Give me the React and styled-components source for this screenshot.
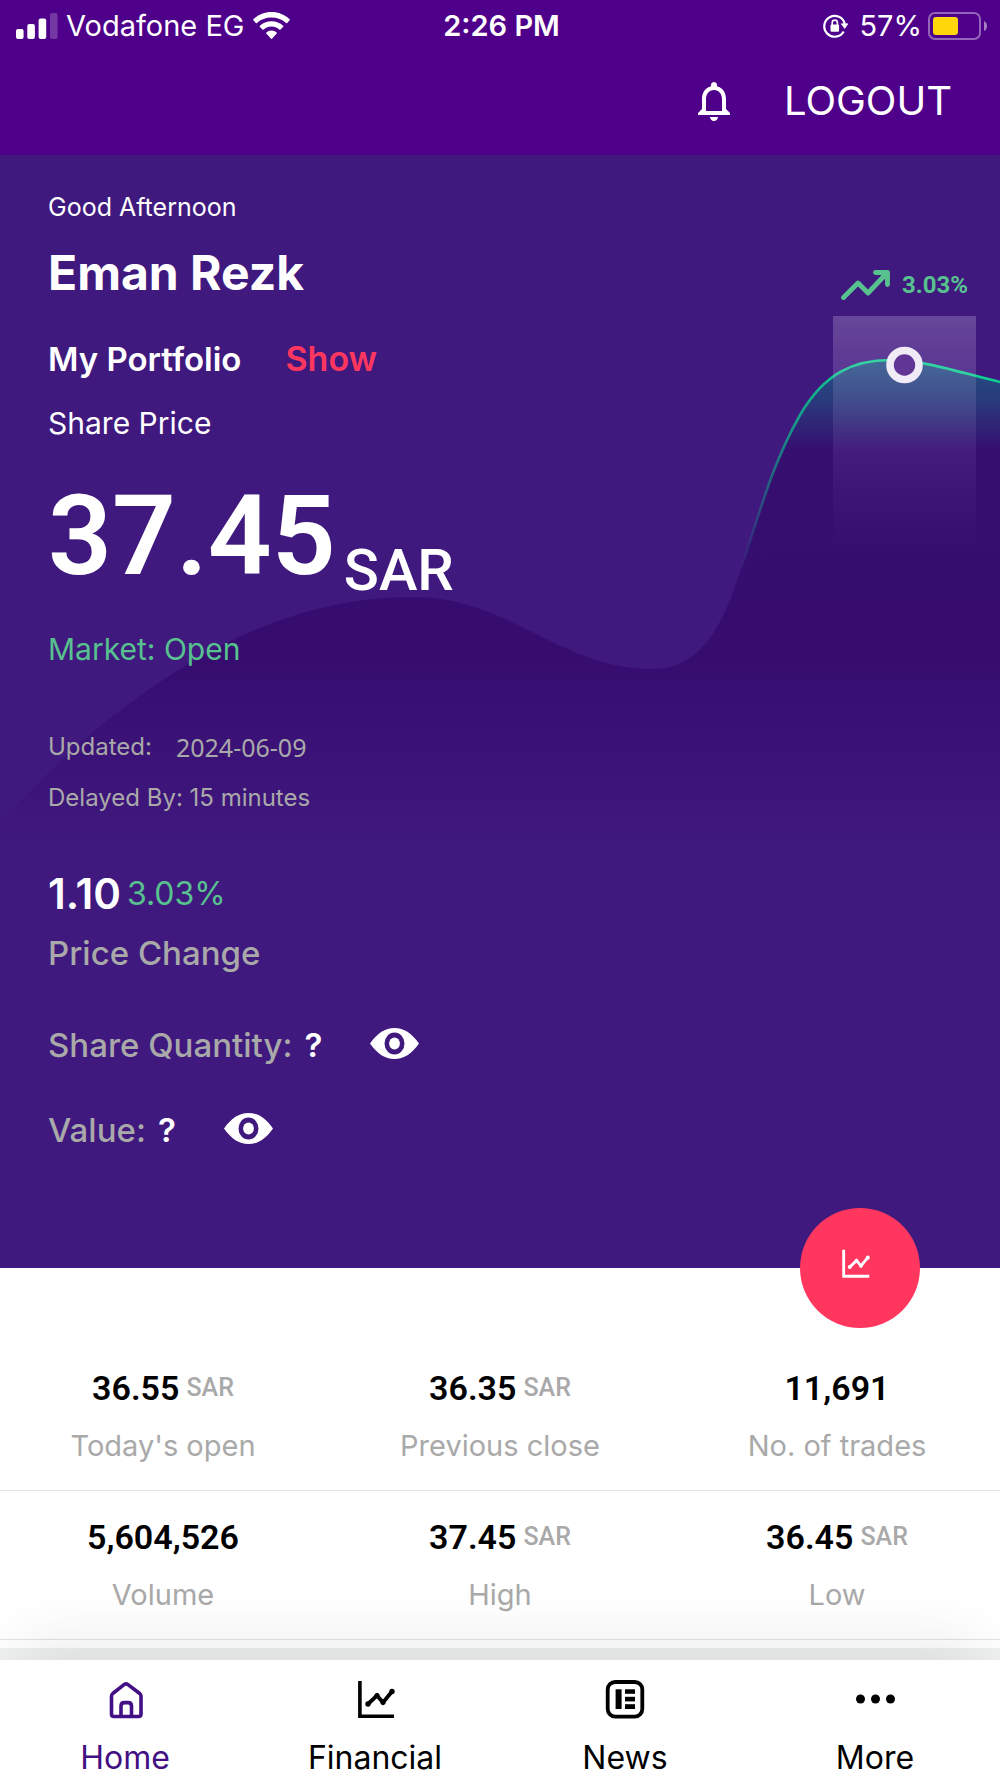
import React from "react";
import styled, { createGlobalStyle } from "styled-components";

const color = {
  header: "#4e008a",
  hero: "#40197f",
  green: "#58c28f",
  pink: "#ff375f",
  muted: "#a9a9a9",
  line: "#e2e2e2",
  active: "#430f85",
};

const GlobalStyle = createGlobalStyle`
  *, *::before, *::after { box-sizing: border-box; }
  body {
    margin: 0;
    background: #fff;
    font-family: Inter, "Liberation Sans", sans-serif;
    -webkit-font-smoothing: antialiased;
  }
  h1, h2, p, dl, dt, dd { margin: 0; font-weight: inherit; }
  button { margin: 0; padding: 0; border: 0; background: none; color: inherit; font: inherit; cursor: pointer; }
  a { color: inherit; text-decoration: none; }
  svg { display: block; flex: none; }
`;

const Header = styled.header`
  background: ${color.header};
  color: #fff;
`;

const StatusBar = styled.div`
  display: grid;
  grid-template-columns: 1fr auto 1fr;
  align-items: center;
  height: 51px;
  padding: 0 13px 0 16px;
  font-size: 29px;
  line-height: 40px;
`;

const StatusGroup = styled.div`
  display: flex;
  align-items: center;
  justify-content: ${(p) => (p.$end ? "flex-end" : "flex-start")};
  gap: ${(p) => (p.$end ? 6 : 8)}px;
`;

const Clock = styled.time`
  font-weight: 600;
`;

const BatteryLevel = styled.span`
  margin-left: 5px;
`;

const Toolbar = styled.div`
  display: flex;
  align-items: center;
  justify-content: flex-end;
  gap: 46px;
  height: 104px;
  padding: 0 48px 4px;
`;

const LogoutButton = styled.button`
  font-size: 40px;
  font-weight: 400;
  line-height: 48px;
`;

const Hero = styled.section`
  position: relative;
  padding: 32px 48px 118px;
  background: ${color.hero};
  color: #fff;
`;

const Backdrop = styled.svg`
  position: absolute;
  inset: 0;
  width: 100%;
  height: 100%;
`;

const HeroBody = styled.div`
  position: relative;
`;

const TrendBadge = styled.div`
  position: absolute;
  top: 110px;
  right: 32px;
  display: flex;
  align-items: center;
  gap: 12px;
  color: ${color.green};
  font: 700 24px/40px Roboto, sans-serif;
`;

const Greeting = styled.p`
  font-size: 25px;
  line-height: 40px;
`;

const UserName = styled.h1`
  margin-top: 16px;
  font-size: 48px;
  font-weight: 700;
  line-height: 60px;
`;

const PortfolioRow = styled.div`
  display: flex;
  align-items: center;
  gap: 44px;
  margin-top: 36px;
  line-height: 40px;
`;

const PortfolioTitle = styled.h2`
  font-size: 33px;
  font-weight: 600;
`;

const ShowButton = styled.button`
  color: ${color.pink};
  font-size: 34px;
  font-weight: 600;
  line-height: 40px;
`;

const BodyText = styled.p`
  margin-top: ${(p) => p.$top}px;
  color: ${(p) => p.$color || "inherit"};
  font-size: 30px;
  line-height: 40px;
`;

const PriceRow = styled.div`
  display: flex;
  align-items: flex-end;
  gap: 8px;
  margin-top: 33px;
  font-family: Roboto, sans-serif;
`;

const Price = styled.span`
  font-size: 112px;
  font-weight: 600;
  line-height: 120px;
`;

const Currency = styled.span`
  font-size: 58px;
  font-weight: 500;
  line-height: 52px;
`;

const MetaRow = styled.p`
  display: flex;
  gap: 24px;
  margin-top: ${(p) => p.$top}px;
  color: ${color.muted};
  font-size: 24px;
  line-height: 30px;
`;

const MetaDate = styled.time`
  font-family: "Noto Sans", sans-serif;
  font-size: 25px;
`;

const ChangeRow = styled.div`
  display: flex;
  align-items: center;
  gap: 6px;
  margin-top: 56px;
  line-height: 50px;
`;

const ChangeValue = styled.span`
  font-size: 42px;
  font-weight: 600;
`;

const ChangePercent = styled.span`
  color: ${color.green};
  font-size: 32px;
`;

const FieldRow = styled.div`
  display: flex;
  align-items: center;
  gap: 12px;
  margin-top: ${(p) => p.$top}px;
  font-size: 33px;
  line-height: 40px;
`;

const FieldLabel = styled.span`
  color: ${color.muted};
  font-weight: 500;
`;

const HiddenValue = styled.span`
  margin-right: 36px;
  font-weight: 600;
`;

const RevealButton = styled.button`
  padding-bottom: 4px;
`;

const ChartButton = styled.button`
  position: absolute;
  right: 80px;
  bottom: -60px;
  z-index: 1;
  display: flex;
  align-items: center;
  justify-content: center;
  width: 120px;
  height: 120px;
  padding: 0 10px 8px 0;
  border-radius: 50%;
  background: ${color.pink};
  color: #fff;
`;

const Stats = styled.section`
  padding: 74px 0 8px;
  background: #fff;
`;

const StatRow = styled.dl`
  display: grid;
  grid-template-columns: repeat(3, 1fr);
  gap: 11px;
  padding: 26px 0 24px;
  border-bottom: 1px solid ${color.line};
`;

const Stat = styled.div`
  display: flex;
  flex-direction: column-reverse;
  align-items: center;
  gap: 18px;
  line-height: 40px;
`;

const StatLabel = styled.dt`
  color: ${color.muted};
  font-size: 29px;
`;

const StatValue = styled.dd`
  display: flex;
  gap: 7px;
  color: #000;
  font-family: Roboto, sans-serif;
  font-size: 34px;
  font-weight: 600;
`;

const StatUnit = styled.span`
  color: ${color.muted};
  font-size: 25px;
  font-weight: 500;
`;

const Band = styled.div`
  height: 12px;
  background: #eff1f0;
`;

const NavBar = styled.nav`
  position: sticky;
  bottom: 0;
  display: grid;
  grid-template-columns: repeat(4, 1fr);
  padding-top: 20px;
  background: #fff;
  box-shadow: 0 -40px 60px -20px rgba(0, 0, 0, 0.08);
`;

const NavLink = styled.a`
  display: flex;
  flex-direction: column;
  align-items: center;
  gap: 18px;
  && { color: ${(p) => (p.$active ? color.active : "#000")}; }
  font-size: 32px;
  line-height: 40px;
`;

const SignalIcon = () => (
  <svg width="42" height="28" viewBox="0 0 42 28" fill="#fff" aria-hidden="true">
    <rect x="0" y="17" width="7.6" height="10" rx="2" />
    <rect x="11.3" y="12" width="7.6" height="15" rx="2" />
    <rect x="22.6" y="6.5" width="7.6" height="20.5" rx="2" />
    <rect x="34" y="1" width="7.6" height="26" rx="2" opacity="0.22" />
  </svg>
);

const WifiIcon = () => (
  <svg width="37" height="28" viewBox="0 0 37 28" fill="#fff" aria-hidden="true">
    <path d="M18.5 0C11.5 0 5.1 2.7 .4 7.2Q-.1 7.8 .4 8.3L2.8 10.900Q3.4 11.4 4 10.9C7.8 7.4 12.9 5.5 18.5 5.5S29.2 7.4 33 10.9Q33.6 11.4 34.2 10.9L36.6 8.3Q37.1 7.8 36.6 7.2C31.9 2.7 25.5 0 18.5 0Z" />
    <path d="M18.5 9.3C14 9.3 9.900 11 6.9 13.8Q6.4 14.4 6.9 14.9L9.5 17.5Q10.1 18 10.7 17.5C12.8 15.7 15.5 14.6 18.5 14.6S24.2 15.7 26.3 17.5Q26.9 18 27.5 17.5L30.1 14.9Q30.6 14.4 30.1 13.8C27.1 11 23 9.3 18.5 9.3Z" />
    <path d="M18.5 18.5C16.5 18.5 14.7 19.3 13.3 20.5Q12.9 21 13.3 21.5L17.8 26.6Q18.5 27.3 19.2 26.6L23.7 21.5Q24.1 21 23.7 20.5C22.3 19.3 20.5 18.5 18.5 18.5Z" />
  </svg>
);

const RotationLockIcon = () => (
  <svg width="25" height="24" viewBox="0 0 25 24" fill="none" aria-hidden="true">
    <path d="M20.7 17.5A10.4 10.4 0 1 1 21.8 10" stroke="#fff" strokeWidth="2.2" />
    <path d="M18.2 9.8H25L21.7 14.5Z" fill="#fff" stroke="#fff" strokeWidth="0.6" strokeLinejoin="round" />
    <rect x="7.5" y="10.5" width="8.6" height="7.2" rx="1.2" fill="#fff" />
    <path d="M9.2 11V8.7a2.6 2.6 0 0 1 5.2 0V11" stroke="#fff" strokeWidth="1.6" />
  </svg>
);

const BatteryIcon = () => (
  <svg width="59" height="28" viewBox="0 0 59 28" aria-hidden="true">
    <rect x="1" y="1" width="51" height="26" rx="6" fill="none" stroke="#fff" strokeOpacity="0.4" strokeWidth="2" />
    <rect x="5" y="5" width="25" height="18" rx="3" fill="#ffd60a" />
    <path d="M56 9q3 1.5 3 5t-3 5z" fill="#fff" fillOpacity="0.5" />
  </svg>
);

const BellIcon = () => (
  <svg width="48" height="48" viewBox="0 0 24 24" fill="#fff" aria-hidden="true">
    <path d="M12 22c1.1 0 2-.9 2-2h-4c0 1.1.9 2 2 2zm6-6v-5c0-3.07-1.63-5.64-4.5-6.32V4c0-.83-.67-1.5-1.5-1.5s-1.5.67-1.5 1.5v.68C7.64 5.36 6 7.92 6 11v5l-2 2v1h16v-1l-2-2zm-2 1H8v-6c0-2.48 1.51-4.5 4-4.5s4 2.02 4 4.5v6z" />
  </svg>
);

const TrendIcon = () => (
  <svg width="49" height="32" viewBox="0 0 49 32" fill="none" stroke="currentColor" strokeWidth="4.8" strokeLinecap="round" strokeLinejoin="round" aria-hidden="true">
    <path d="M2.5 28.5 17 14 27 24 45 5" />
    <path d="M34.5 3.5H46.5V15.5" />
    <path d="M41 4H46V9Z" fill="currentColor" />
  </svg>
);

const EyeIcon = () => (
  <svg width="49" height="31" viewBox="0 0 49 31" aria-hidden="true">
    <path fill="#fff" fillRule="evenodd" d="M0 15.5C7.5 5 15 0 24.5 0S41.5 5 49 15.5C41.5 26 34 31 24.5 31S7.5 26 0 15.5ZM24.5 4.5a10 11 0 1 0 0 22a10 11 0 1 0 0-22Z" />
    <ellipse cx="24.5" cy="15.5" rx="5.4" ry="5.9" fill="#fff" />
  </svg>
);

const ChartIcon = ({ size = 40, axis = 3.6 }) => (
  <svg width={size} height={size} viewBox="0 0 40 40" fill="none" stroke="currentColor" aria-hidden="true">
    <path d="M4.9 1V36.3H39" strokeWidth={axis} />
    <path d="M13 24 22 15.5 28 22.5 37 11.5" strokeWidth="3.8" />
    <circle cx="13" cy="24" r="2.7" fill="currentColor" stroke="none" />
    <circle cx="22" cy="15.5" r="2.6" fill="currentColor" stroke="none" />
    <circle cx="28" cy="22.3" r="2.6" fill="currentColor" stroke="none" />
    <circle cx="37" cy="11.5" r="2.7" fill="currentColor" stroke="none" />
  </svg>
);

const HomeIcon = () => (
  <svg width="40" height="40" viewBox="0 0 40 40" fill="none" stroke="currentColor" strokeWidth="3.6" aria-hidden="true">
    <path d="M6.500 16.2q0-1.6 1.3-2.7L19 4.6q2-1.5 4 0L34.7 13.5q1.3 1.1 1.3 2.7V34q0 2.5-2.500 2.5H9q-2.5 0-2.5-2.5Z" />
    <path d="M16 36V26q0-3.4 3.4-3.4h3.7q3.4 0 3.4 3.4v10" />
  </svg>
);

const NewsIcon = () => (
  <svg width="40" height="40" viewBox="0 0 40 40" fill="currentColor" aria-hidden="true">
    <rect x="2.7" y="2" width="34.6" height="34.6" rx="7.5" fill="none" stroke="currentColor" strokeWidth="3.8" />
    <rect x="10.6" y="9.3" width="6" height="19.7" />
    <rect x="20" y="9.3" width="10" height="4.5" />
    <rect x="20" y="16.8" width="10" height="4.6" />
    <rect x="20" y="24.2" width="10" height="4.8" />
  </svg>
);

const MoreIcon = () => (
  <svg width="40" height="40" viewBox="0 0 40 40" fill="currentColor" aria-hidden="true">
    <circle cx="5.5" cy="19" r="4.5" />
    <circle cx="20.5" cy="19" r="4.5" />
    <circle cx="35.5" cy="19" r="4.5" />
  </svg>
);

const CURVE =
  "M0,667 C60,603 110,557 188,509 C260,467 330,442 413,442 C510,442 560,514 652,514 C690,514 712,489 730,445";
const RISE =
  "C755,380 765,322 800,260 C825,217 855,205 890,205 C925,205 965,219 1000,227";

const PriceCurve = () => (
  <Backdrop viewBox="0 0 1000 1113" preserveAspectRatio="none" aria-hidden="true">
    <defs>
      <linearGradient id="area" gradientUnits="userSpaceOnUse" x1="0" y1="205" x2="0" y2="695">
        <stop offset="0" stopColor="#235084" />
        <stop offset="0.08" stopColor="#293b7b" />
        <stop offset="0.185" stopColor="#360e70" />
        <stop offset="0.6" stopColor="#360c6f" />
        <stop offset="1" stopColor={color.hero} />
      </linearGradient>
      <linearGradient id="stroke" gradientUnits="userSpaceOnUse" x1="740" y1="420" x2="850" y2="210">
        <stop offset="0" stopColor="#00cf8b" stopOpacity="0" />
        <stop offset="1" stopColor="#0fcf91" />
      </linearGradient>
      <linearGradient id="column" x1="0" y1="0" x2="0" y2="1">
        <stop offset="0" stopColor="#fff" stopOpacity="0.2" />
        <stop offset="1" stopColor="#b070ff" stopOpacity="0" />
      </linearGradient>
    </defs>
    <path d={`${CURVE} ${RISE} V700 H0 Z`} fill="url(#area)" />
    <path d={`M730,445 ${RISE}`} fill="none" stroke="url(#stroke)" strokeWidth="2.6" />
    <rect x="833" y="161" width="143" height="240" fill="url(#column)" />
    <circle cx="904.5" cy="210" r="14.5" fill="#613596" stroke="#f1ebf7" strokeWidth="7.6" />
  </Backdrop>
);

const rows = [
  [
    { value: "36.55", unit: "SAR", label: "Today's open" },
    { value: "36.35", unit: "SAR", label: "Previous close" },
    { value: "11,691", label: "No. of trades" },
  ],
  [
    { value: "5,604,526", label: "Volume" },
    { value: "37.45", unit: "SAR", label: "High" },
    { value: "36.45", unit: "SAR", label: "Low" },
  ],
];

const tabs = [
  { label: "Home", Icon: HomeIcon, active: true },
  { label: "Financial", Icon: ChartIcon },
  { label: "News", Icon: NewsIcon },
  { label: "More", Icon: MoreIcon },
];

export default function App() {
  return (
    <>
      <GlobalStyle />
      <Header>
        <StatusBar>
          <StatusGroup>
            <SignalIcon />
            <span>Vodafone EG</span>
            <WifiIcon />
          </StatusGroup>
          <Clock>2:26 PM</Clock>
          <StatusGroup $end>
            <RotationLockIcon />
            <BatteryLevel>57%</BatteryLevel>
            <BatteryIcon />
          </StatusGroup>
        </StatusBar>
        <Toolbar>
          <button type="button" aria-label="Notifications"><BellIcon /></button>
          <LogoutButton type="button">LOGOUT</LogoutButton>
        </Toolbar>
      </Header>
      <main>
        <Hero>
          <PriceCurve />
          <TrendBadge><TrendIcon />3.03%</TrendBadge>
          <HeroBody>
            <Greeting>Good Afternoon</Greeting>
            <UserName>Eman Rezk</UserName>
            <PortfolioRow>
              <PortfolioTitle>My Portfolio</PortfolioTitle>
              <ShowButton type="button">Show</ShowButton>
            </PortfolioRow>
            <BodyText $top={24}>Share Price</BodyText>
            <PriceRow>
              <Price>37.45</Price>
              <Currency>SAR</Currency>
            </PriceRow>
            <BodyText $top={33} $color={color.green}>Market: Open</BodyText>
            <MetaRow $top={63}>
              <span>Updated:</span>
              <MetaDate>2024-06-09</MetaDate>
            </MetaRow>
            <MetaRow $top={21}>Delayed By: 15 minutes</MetaRow>
            <ChangeRow>
              <ChangeValue>1.10</ChangeValue>
              <ChangePercent>3.03%</ChangePercent>
            </ChangeRow>
            <FieldRow $top={14}><FieldLabel>Price Change</FieldLabel></FieldRow>
            <FieldRow $top={52}>
              <FieldLabel>Share Quantity:</FieldLabel>
              <HiddenValue>?</HiddenValue>
              <RevealButton type="button" aria-label="Show share quantity"><EyeIcon /></RevealButton>
            </FieldRow>
            <FieldRow $top={45}>
              <FieldLabel>Value:</FieldLabel>
              <HiddenValue>?</HiddenValue>
              <RevealButton type="button" aria-label="Show value"><EyeIcon /></RevealButton>
            </FieldRow>
          </HeroBody>
          <ChartButton type="button" aria-label="Open chart"><ChartIcon size={30} axis={3.8} /></ChartButton>
        </Hero>
        <Stats>
          {rows.map((row, i) => (
            <StatRow key={i}>
              {row.map((s) => (
                <Stat key={s.label}>
                  <StatLabel>{s.label}</StatLabel>
                  <StatValue>
                    {s.value}
                    {s.unit && <StatUnit>{s.unit}</StatUnit>}
                  </StatValue>
                </Stat>
              ))}
            </StatRow>
          ))}
        </Stats>
        <Band />
      </main>
      <NavBar>
        {tabs.map(({ label, Icon, active }) => (
          <NavLink key={label} href="#" $active={active} aria-current={active ? "page" : undefined}>
            <Icon />
            {label}
          </NavLink>
        ))}
      </NavBar>
    </>
  );
}
